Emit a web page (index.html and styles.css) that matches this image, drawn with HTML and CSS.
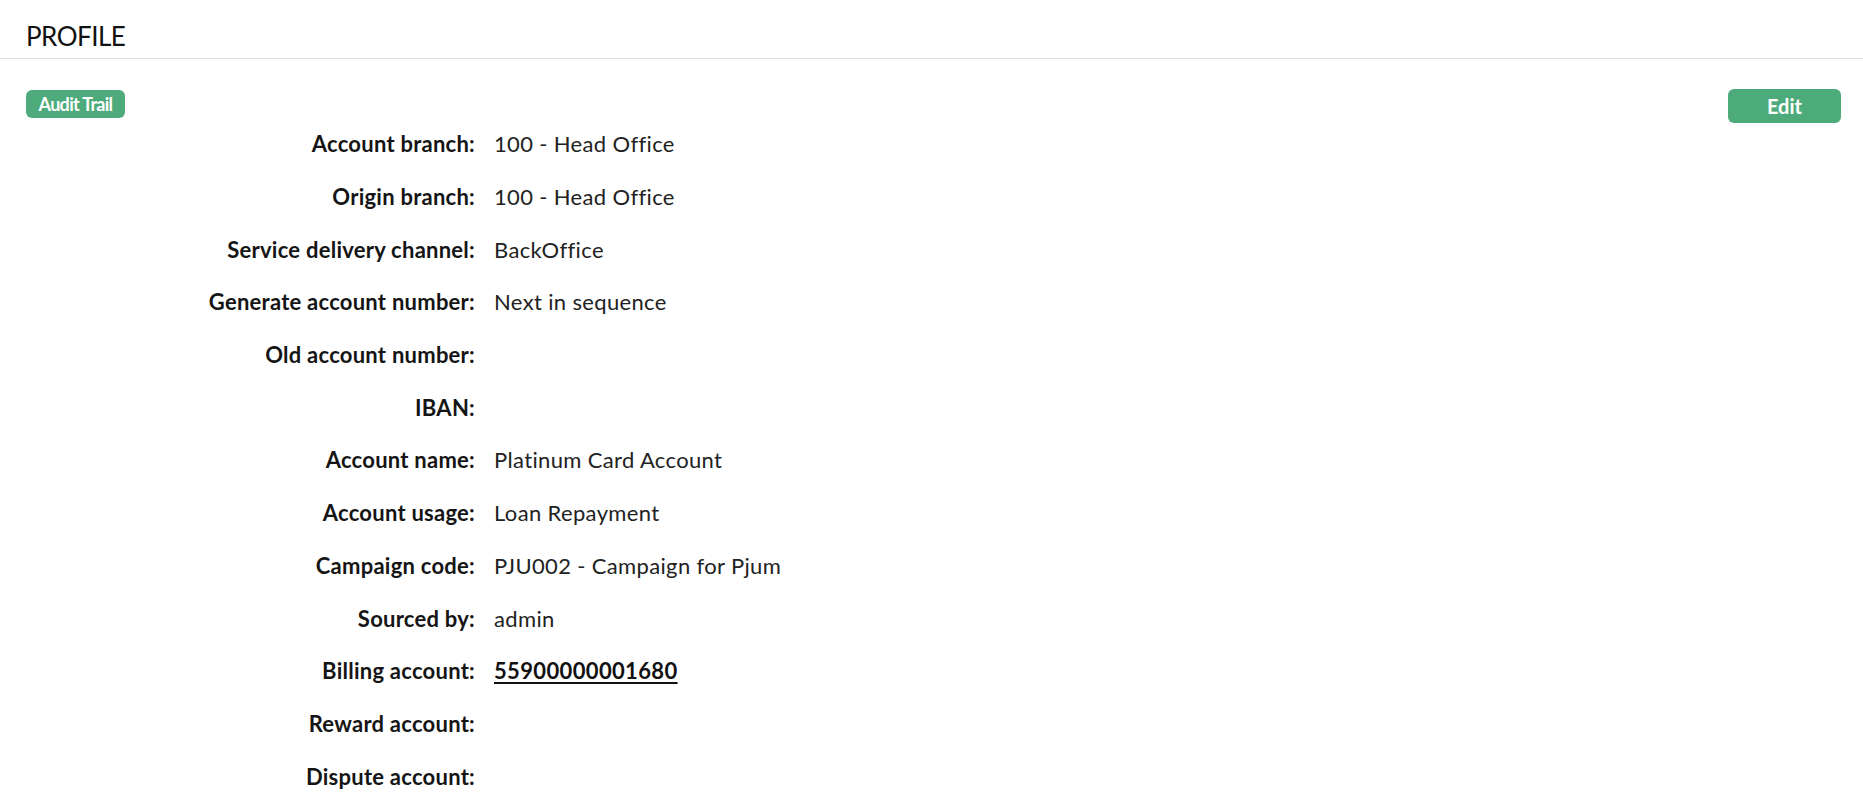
FILE: index.html
```html
<!DOCTYPE html>
<html>
<head>
<meta charset="utf-8">
<title>Profile</title>
<link rel="stylesheet" href="styles.css">
</head>
<body>
<header class="page-header">
  <h1 class="page-title">PROFILE</h1>
</header>
<main class="content">
  <div class="toolbar">
    <button class="btn btn-small">Audit Trail</button>
    <button class="btn btn-edit">Edit</button>
  </div>
  <dl class="details">
    <div class="row"><dt>Account branch:</dt><dd>100 - Head Office</dd></div>
    <div class="row"><dt>Origin branch:</dt><dd>100 - Head Office</dd></div>
    <div class="row"><dt>Service delivery channel:</dt><dd>BackOffice</dd></div>
    <div class="row"><dt>Generate account number:</dt><dd>Next in sequence</dd></div>
    <div class="row"><dt>Old account number:</dt><dd></dd></div>
    <div class="row"><dt>IBAN:</dt><dd></dd></div>
    <div class="row"><dt>Account name:</dt><dd>Platinum Card Account</dd></div>
    <div class="row"><dt>Account usage:</dt><dd>Loan Repayment</dd></div>
    <div class="row"><dt>Campaign code:</dt><dd>PJU002 - Campaign for Pjum</dd></div>
    <div class="row"><dt>Sourced by:</dt><dd>admin</dd></div>
    <div class="row"><dt>Billing account:</dt><dd><a class="link" href="#">55900000001680</a></dd></div>
    <div class="row"><dt>Reward account:</dt><dd></dd></div>
    <div class="row"><dt>Dispute account:</dt><dd></dd></div>
  </dl>
</main>
</body>
</html>
```
FILE: styles.css
```css
html, body {
  margin: 0;
  padding: 0;
  background: #ffffff;
  font-family: Lato, "Open Sans", Arial, sans-serif;
  color: #1a1a1a;
}

.page-header {
  padding: 20px 26px 6px;
  border-bottom: 1px solid #dedede;
}

.page-title {
  margin: 0;
  font-size: 26px;
  line-height: 32px;
  font-weight: 400;
  letter-spacing: -0.5px;
  color: #111;
}

.content {
  padding: 0 22px 0 26px;
}

.toolbar {
  display: flex;
  justify-content: space-between;
  align-items: flex-start;
  height: 29px;
  padding-top: 30px;
}

.btn {
  border: none;
  background: #4caa7b;
  color: #fff;
  font-family: inherit;
  font-weight: 700;
  cursor: pointer;
  border-radius: 6px;
  padding: 0;
}

.btn-small {
  margin-top: 1px;
  width: 99px;
  height: 28px;
  font-size: 18px;
  letter-spacing: -0.7px;
  line-height: 28px;
}

.btn-edit {
  width: 113px;
  height: 34px;
  font-size: 20px;
  line-height: 34px;
}

.details {
  margin: 0;
  display: flex;
  flex-direction: column;
}

.row {
  display: grid;
  grid-template-columns: 449px 1fr;
  column-gap: 19px;
  height: 52.7px;
  align-items: center;
  font-size: 22px;
}

.row dt {
  text-align: right;
  font-weight: 700;
  letter-spacing: 0.25px;
  color: #151515;
  line-height: 30px;
}

.row dd {
  margin: 0;
  font-weight: 400;
  letter-spacing: 0.35px;
  color: #222;
  line-height: 30px;
}

.link {
  color: #111;
  font-weight: 700;
  text-decoration: underline;
  text-decoration-thickness: 2px;
  text-underline-offset: 3px;
}
```
